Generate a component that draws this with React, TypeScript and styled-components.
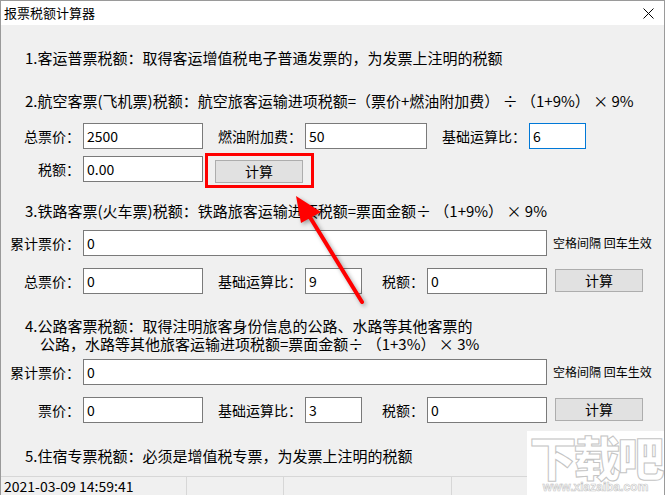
import styled, { createGlobalStyle } from "styled-components";

const GlobalStyle = createGlobalStyle`
  html, body {
    margin: 0;
    padding: 0;
    background: #ffffff;
  }
  * {
    box-sizing: border-box;
  }
`;

const Window = styled.div`
  position: relative;
  width: 665px;
  height: 495px;
  display: flex;
  flex-direction: column;
  border: 1px solid #9a9a9a;
  border-bottom: none;
  background: #f0f0f0;
  font-family: "Noto Sans CJK SC", "Noto Sans", sans-serif;
  color: #000;
  overflow: hidden;
`;

const TitleBar = styled.div`
  height: 24px;
  display: flex;
  align-items: center;
  justify-content: space-between;
  padding: 0 10px 0 3px;
  background: #ffffff;
`;

const TitleText = styled.span`
  font-size: 13px;
  line-height: 24px;
`;

const Body = styled.div`
  flex: 1;
  display: flex;
  flex-direction: column;
`;

const Section = styled.div<{ $mt: number; $lh?: number }>`
  margin-top: ${(p) => p.$mt}px;
  padding-left: 24px;
  font-size: 15px;
  line-height: ${(p) => p.$lh ?? 20}px;
  white-space: nowrap;
`;

const Indent = styled.div`
  padding-left: 15px;
`;

const Row = styled.div<{ $mt: number }>`
  margin-top: ${(p) => p.$mt}px;
  display: flex;
  align-items: flex-start;
  height: 26px;
`;

const Label = styled.label<{ $w: number }>`
  width: ${(p) => p.$w}px;
  margin-right: 3px;
  text-align: right;
  font-size: 14px;
  line-height: 26px;
  white-space: nowrap;
`;

const Field = styled.input<{ $w: number; $focus?: boolean }>`
  width: ${(p) => p.$w}px;
  height: 26px;
  padding: 0 3px;
  border: 1px solid ${(p) => (p.$focus ? "#0078d7" : "#7a7a7a")};
  background: #fff;
  font-family: "Noto Sans CJK SC", sans-serif;
  font-size: 14px;
  color: #000;
  outline: none;
`;

const Hint = styled.span`
  margin-left: 6px;
  font-size: 12px;
  line-height: 26px;
  white-space: nowrap;
`;

const CalcButton = styled.button<{ $ml: number; $mt: number }>`
  margin-left: ${(p) => p.$ml}px;
  margin-top: ${(p) => p.$mt}px;
  width: 88px;
  height: 23px;
  padding: 0;
  background: #e1e1e1;
  border: 1px solid #adadad;
  font-family: "Noto Sans CJK SC", sans-serif;
  font-size: 14px;
  line-height: 21px;
  color: #000;
`;

const StatusBar = styled.div`
  height: 19px;
  display: flex;
  border-top: 1px solid #d7d7d7;
  background: #f0f0f0;
`;

const StatusPanel = styled.div<{ $w: number }>`
  width: ${(p) => p.$w}px;
  padding-left: 3px;
  font-size: 14px;
  line-height: 18px;
  white-space: nowrap;
  & + & {
    border-left: 1px solid #d7d7d7;
  }
`;

const Highlight = styled.div`
  position: absolute;
  left: 204px;
  top: 152px;
  width: 109px;
  height: 35px;
  border: 3px solid #ff0000;
  pointer-events: none;
`;

const Overlay = styled.svg`
  position: absolute;
  left: -1px;
  top: -1px;
  pointer-events: none;
  filter: drop-shadow(2px 2px 2px rgba(0, 0, 0, 0.35));
`;

const Watermark = styled.div`
  position: absolute;
  right: 0;
  bottom: 0;
  width: 137px;
  height: 64px;
  display: flex;
  flex-direction: column;
  align-items: center;
  pointer-events: none;
  color: #ffffff;
  -webkit-text-stroke: 1px #c4c4c4;
  background: #ffffff;
`;

const WatermarkBig = styled.span`
  font-size: 47px;
  font-weight: 900;
  line-height: 50px;
  letter-spacing: -3px;
`;

const WatermarkSmall = styled.span`
  font-family: "Liberation Sans", sans-serif;
  font-size: 12px;
  font-weight: 700;
  line-height: 12px;
  -webkit-text-stroke: 0.6px #c4c4c4;
`;

function CloseIcon() {
  return (
    <svg width="11" height="11" viewBox="0 0 11 11">
      <path d="M0.5 0.5 L10.5 10.5 M10.5 0.5 L0.5 10.5" stroke="#000" strokeWidth="1" fill="none" />
    </svg>
  );
}

export default function App() {
  return (
    <>
      <GlobalStyle />
      <Window>
        <TitleBar>
          <TitleText>报票税额计算器</TitleText>
          <CloseIcon />
        </TitleBar>
        <Body>
          <Section $mt={23}>1.客运普票税额：取得客运增值税电子普通发票的，为发票上注明的税额</Section>
          <Section $mt={23}>
            2.航空客票(飞机票)税额：航空旅客运输进项税额=（票价+燃油附加费） ÷ （1+9%） × 9%
          </Section>

          <Row $mt={12}>
            <Label $w={79}>总票价：</Label>
            <Field $w={120} defaultValue="2500" />
            <Label $w={99}>燃油附加费：</Label>
            <Field $w={122} defaultValue="50" />
            <Label $w={99}>基础运算比：</Label>
            <Field $w={57} $focus defaultValue="6" />
          </Row>
          <Row $mt={7}>
            <Label $w={79}>税额：</Label>
            <Field $w={120} defaultValue="0.00" />
            <CalcButton $ml={12} $mt={4}>计算</CalcButton>
          </Row>

          <Section $mt={19}>3.铁路客票(火车票)税额：铁路旅客运输进项税额=票面金额÷ （1+9%） × 9%</Section>
          <Row $mt={9}>
            <Label $w={79}>累计票价：</Label>
            <Field $w={464} defaultValue="0" />
            <Hint>空格间隔 回车生效</Hint>
          </Row>
          <Row $mt={12}>
            <Label $w={79}>总票价：</Label>
            <Field $w={120} defaultValue="0" />
            <Label $w={99}>基础运算比：</Label>
            <Field $w={57} defaultValue="9" />
            <Label $w={62}>税额：</Label>
            <Field $w={120} defaultValue="0" />
            <CalcButton $ml={8} $mt={1}>计算</CalcButton>
          </Row>

          <Section $mt={23} $lh={18}>
            4.公路客票税额：取得注明旅客身份信息的公路、水路等其他客票的
            <Indent>公路，水路等其他旅客运输进项税额=票面金额÷ （1+3%） × 3%</Indent>
          </Section>
          <Row $mt={6}>
            <Label $w={79}>累计票价：</Label>
            <Field $w={464} defaultValue="0" />
            <Hint>空格间隔 回车生效</Hint>
          </Row>
          <Row $mt={12}>
            <Label $w={79}>票价：</Label>
            <Field $w={120} defaultValue="0" />
            <Label $w={99}>基础运算比：</Label>
            <Field $w={57} defaultValue="3" />
            <Label $w={62}>税额：</Label>
            <Field $w={120} defaultValue="0" />
            <CalcButton $ml={8} $mt={1}>计算</CalcButton>
          </Row>

          <Section $mt={23}>5.住宿专票税额：必须是增值税专票，为发票上注明的税额</Section>
        </Body>
        <StatusBar>
          <StatusPanel $w={185}>2021-03-09 14:59:41</StatusPanel>
          <StatusPanel $w={97} />
          <StatusPanel $w={168} />
          <StatusPanel $w={78} />
        </StatusBar>

        <Highlight />
        <Overlay width="665" height="495" viewBox="0 0 665 495">
          <line x1="362" y1="302" x2="308" y2="214" stroke="#f00" strokeWidth="4" strokeLinecap="round" />
          <polygon points="296,196 321,212 301,223" fill="#f00" />
        </Overlay>
        <Watermark>
          <WatermarkBig>下载吧</WatermarkBig>
          <WatermarkSmall>www.xiazaiba.com</WatermarkSmall>
        </Watermark>
      </Window>
    </>
  );
}
